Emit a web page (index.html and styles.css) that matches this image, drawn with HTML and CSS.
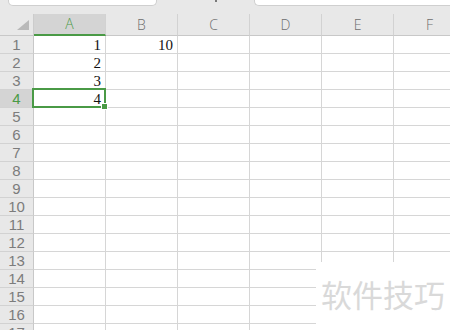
FILE: index.html
```html
<!DOCTYPE html>
<html>
<head>
<meta charset="utf-8">
<link rel="stylesheet" href="styles.css">
</head>
<body>
<div class="page">
  <div class="topbar">
    <div class="box box-left"></div>
    <div class="fx-mark"></div>
    <div class="box box-right"></div>
  </div>
  <div class="sheet">
    <div class="grid">
      <div class="corner"><div class="tri"></div></div>
      <div class="ch sel">A</div>
      <div class="ch">B</div>
      <div class="ch">C</div>
      <div class="ch">D</div>
      <div class="ch">E</div>
      <div class="ch">F</div>

      <div class="rh">1</div><div class="c">1</div><div class="c">10</div><div class="c"></div><div class="c"></div><div class="c"></div><div class="c"></div>
      <div class="rh">2</div><div class="c">2</div><div class="c"></div><div class="c"></div><div class="c"></div><div class="c"></div><div class="c"></div>
      <div class="rh">3</div><div class="c">3</div><div class="c"></div><div class="c"></div><div class="c"></div><div class="c"></div><div class="c"></div>
      <div class="rh sel">4</div><div class="c">4</div><div class="c"></div><div class="c"></div><div class="c"></div><div class="c"></div><div class="c"></div>
      <div class="rh">5</div><div class="c"></div><div class="c"></div><div class="c"></div><div class="c"></div><div class="c"></div><div class="c"></div>
      <div class="rh">6</div><div class="c"></div><div class="c"></div><div class="c"></div><div class="c"></div><div class="c"></div><div class="c"></div>
      <div class="rh">7</div><div class="c"></div><div class="c"></div><div class="c"></div><div class="c"></div><div class="c"></div><div class="c"></div>
      <div class="rh">8</div><div class="c"></div><div class="c"></div><div class="c"></div><div class="c"></div><div class="c"></div><div class="c"></div>
      <div class="rh">9</div><div class="c"></div><div class="c"></div><div class="c"></div><div class="c"></div><div class="c"></div><div class="c"></div>
      <div class="rh">10</div><div class="c"></div><div class="c"></div><div class="c"></div><div class="c"></div><div class="c"></div><div class="c"></div>
      <div class="rh">11</div><div class="c"></div><div class="c"></div><div class="c"></div><div class="c"></div><div class="c"></div><div class="c"></div>
      <div class="rh">12</div><div class="c"></div><div class="c"></div><div class="c"></div><div class="c"></div><div class="c"></div><div class="c"></div>
      <div class="rh">13</div><div class="c"></div><div class="c"></div><div class="c"></div><div class="c"></div><div class="c"></div><div class="c"></div>
      <div class="rh">14</div><div class="c"></div><div class="c"></div><div class="c"></div><div class="c"></div><div class="c"></div><div class="c"></div>
      <div class="rh">15</div><div class="c"></div><div class="c"></div><div class="c"></div><div class="c"></div><div class="c"></div><div class="c"></div>
      <div class="rh">16</div><div class="c"></div><div class="c"></div><div class="c"></div><div class="c"></div><div class="c"></div><div class="c"></div>
      <div class="rh">17</div><div class="c"></div><div class="c"></div><div class="c"></div><div class="c"></div><div class="c"></div><div class="c"></div>
    </div>
    <div class="selbox"><div class="handle"></div></div>
    <div class="watermark">软件技巧</div>
  </div>
</div>
</body>
</html>
```

FILE: styles.css
```css
html, body {
  margin: 0;
  padding: 0;
  background: #ffffff;
}
.page {
  width: 450px;
  height: 330px;
  overflow: hidden;
  position: relative;
}
.topbar {
  height: 14px;
  background: #e8e8e8;
  position: relative;
  display: flex;
  align-items: flex-start;
}
.box {
  height: 5px;
  background: #ffffff;
  border: 1px solid #cfcfcf;
  border-top: none;
  border-radius: 0 0 5px 5px;
}
.box-left {
  margin-left: 8px;
  width: 147px;
}
.fx-mark {
  margin-left: 58px;
  width: 2px;
  height: 2px;
  background: #555;
  border-radius: 1px;
}
.box-right {
  margin-left: 37px;
  flex: 1;
  border-right: none;
  border-radius: 0 0 0 5px;
}
.sheet {
  position: relative;
}
.grid {
  display: grid;
  grid-template-columns: 34px repeat(6, 72px);
  grid-template-rows: 22px;
  grid-auto-rows: 18px;
  font-family: "Open Sans", "Liberation Sans", Arial, sans-serif;
}
.corner, .ch, .rh, .c {
  box-sizing: border-box;
  border-right: 1px solid #d6d6d6;
  border-bottom: 1px solid #d6d6d6;
  overflow: hidden;
}
.corner {
  background: #e8e8e8;
  border-right-color: #cccccc;
  border-bottom-color: #c8c8c8;
  position: relative;
}
.tri {
  position: absolute;
  left: 17px;
  top: 6px;
  width: 0;
  height: 0;
  border-left: 12px solid transparent;
  border-bottom: 10px solid #b9b9b9;
}
.ch {
  background: #e8e8e8;
  border-right-color: #d2d2d2;
  border-bottom-color: #c8c8c8;
  color: #6e6e6e;
  font-size: 14px;
  font-weight: 300;
  line-height: 16px;
  display: flex;
  align-items: center;
  justify-content: center;
}
.ch.sel {
  background: #d4d4d4;
  color: #4a9a46;
  border-bottom: 2px solid #4a9a46;
}
.rh {
  background: #e8e8e8;
  border-right-color: #c8c8c8;
  border-bottom-color: #d2d2d2;
  color: #7c7c7c;
  font-family: "Liberation Sans", Arial, sans-serif;
  font-size: 15px;
  line-height: 16px;
  display: flex;
  align-items: center;
  justify-content: center;
}
.rh.sel {
  background: #d4d4d4;
  color: #4a9a46;
}
.c {
  font-family: "Liberation Serif", "Times New Roman", serif;
  font-size: 15px;
  color: #111;
  text-align: right;
  padding-right: 4px;
  line-height: 18px;
}
.selbox {
  position: absolute;
  left: 32px;
  top: 74px;
  width: 74px;
  height: 20px;
  box-sizing: border-box;
  border: 2px solid #4a9a46;
}
.handle {
  position: absolute;
  right: -4px;
  bottom: -4px;
  width: 5px;
  height: 5px;
  background: #4a9a46;
  border: 1px solid #ffffff;
}
.watermark {
  position: absolute;
  left: 316px;
  top: 248px;
  width: 140px;
  height: 80px;
  background: #ffffff;
  color: #d9d9d9;
  font-family: "Noto Sans CJK SC", sans-serif;
  font-size: 31px;
  line-height: 40px;
  padding-left: 5px;
  padding-top: 12px;
  box-sizing: border-box;
}
```
